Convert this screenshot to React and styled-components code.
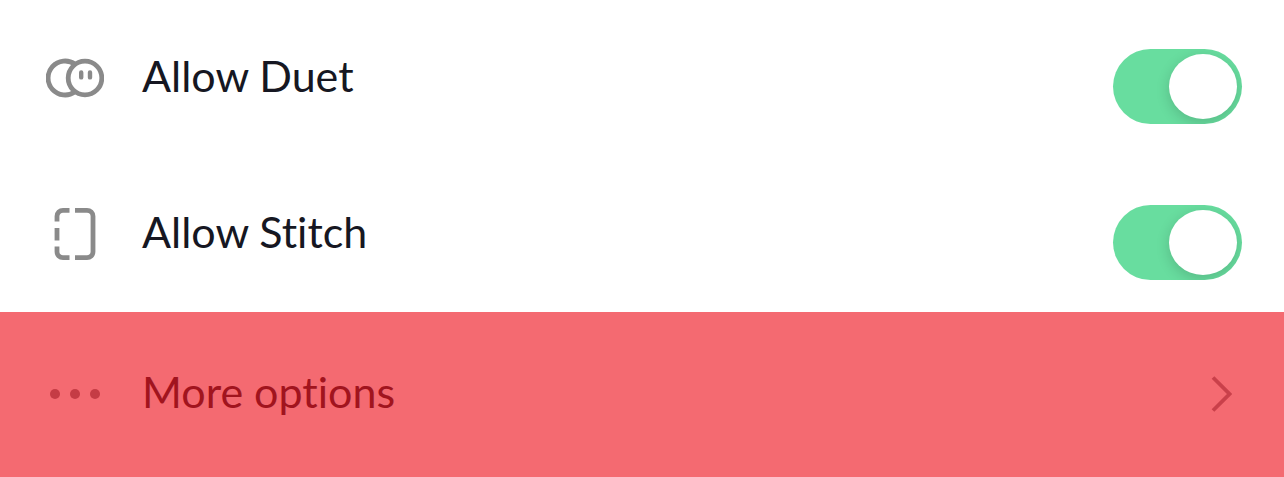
import React, { useState } from "react";
import styled, { createGlobalStyle } from "styled-components";

const GlobalStyle = createGlobalStyle`
  *, *::before {
    box-sizing: border-box;
  }
  body {
    margin: 0;
    background-color: #fff;
    font-family: Lato, "Liberation Sans", sans-serif;
    font-variant-ligatures: none;
  }
`;

const Row = styled.div`
  display: flex;
  align-items: center;
  height: 156px;
  padding: 0 42px;
  color: #161722;
`;

const MoreRow = styled.button`
  display: flex;
  align-items: center;
  width: 100%;
  height: 165px;
  padding: 0 42px 2px;
  border: none;
  background-color: #f46a71;
  color: #a1141e;
  font-family: inherit;
  font-variant-ligatures: inherit;
  text-align: left;
  cursor: pointer;
`;

const IconSlot = styled.span`
  display: flex;
  justify-content: center;
  flex: none;
  width: 66px;
  margin-right: 34px;
  color: ${({ $danger }) => ($danger ? "#c53c45" : "#8a8a8a")};
`;

const Label = styled.label`
  flex: 1;
  padding-bottom: 4px;
  font-size: 43px;
  line-height: 52px;
`;

const MoreLabel = styled(Label).attrs({ as: "span" })``;

const Switch = styled.input`
  appearance: none;
  flex: none;
  width: 129px;
  height: 75px;
  margin: 16px 0 0;
  padding: 5px;
  border-radius: 38px;
  background-color: ${({ checked }) => (checked ? "#68dd9f" : "#e3e3e4")};
  overflow: hidden;
  cursor: pointer;

  &::before {
    content: "";
    display: block;
    width: 68px;
    height: 65px;
    margin-left: ${({ checked }) => (checked ? "51px" : "0")};
    border-radius: 50%;
    background-color: #fff;
    box-shadow: 0 4px 14px rgba(0, 0, 0, 0.16);
  }
`;

const Chevron = styled.svg`
  flex: none;
  margin-right: 10px;
  color: #c9404a;
`;

const DuetIcon = () => (
  <svg width="58" height="40" viewBox="0 0 58 40" fill="none" stroke="currentColor" strokeWidth="4.8">
    <path d="M29 6.2A17 17 0 1 0 29 33.8" />
    <circle cx="39" cy="20" r="16.8" />
    <path d="M35.2 14.4v5M44 14.4v5" strokeWidth="4.4" strokeLinecap="round" />
  </svg>
);

const StitchIcon = () => (
  <svg width="42" height="54" viewBox="0 0 42 54" fill="none" stroke="currentColor" strokeWidth="4.8">
    <path d="M15.5 3.3H9a6 6 0 0 0-6 6v5.2" />
    <path d="M3 21v12.5" />
    <path d="M3 39.5v5.2a6 6 0 0 0 6 6h6.5" />
    <path d="M21 3.3h12a6 6 0 0 1 6 6v35.4a6 6 0 0 1-6 6H21" />
  </svg>
);

const DotsIcon = () => (
  <svg width="52" height="12" viewBox="0 0 52 12" fill="currentColor">
    <circle cx="6" cy="6" r="5" />
    <circle cx="26" cy="6" r="5" />
    <circle cx="46" cy="6" r="5" />
  </svg>
);

const ToggleRow = ({ id, icon, text }) => {
  const [checked, setChecked] = useState(true);

  return (
    <Row>
      <IconSlot>{icon}</IconSlot>
      <Label htmlFor={id}>{text}</Label>
      <Switch
        id={id}
        type="checkbox"
        role="switch"
        checked={checked}
        onChange={() => setChecked(!checked)}
      />
    </Row>
  );
};

const App = () => {
  return (
    <>
      <GlobalStyle />
      <main>
        <ToggleRow id="duet" icon={<DuetIcon />} text="Allow Duet" />
        <ToggleRow id="stitch" icon={<StitchIcon />} text="Allow Stitch" />
        <MoreRow type="button">
          <IconSlot $danger>
            <DotsIcon />
          </IconSlot>
          <MoreLabel>More options</MoreLabel>
          <Chevron width="22" height="38" viewBox="0 0 22 38" fill="none" stroke="currentColor" strokeWidth="3.8">
            <path d="M3 2.5L19.5 19L3 35.5" />
          </Chevron>
        </MoreRow>
      </main>
    </>
  );
};

export default App;
